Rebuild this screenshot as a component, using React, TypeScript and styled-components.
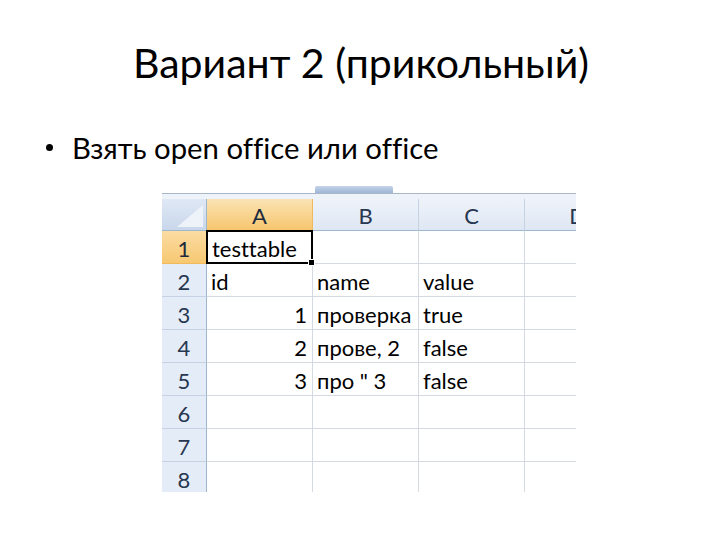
import styled, { createGlobalStyle } from 'styled-components';

const GlobalStyle = createGlobalStyle`
  html, body {
    margin: 0;
    padding: 0;
    background: #ffffff;
  }
  body {
    font-family: Lato, 'Open Sans', 'Noto Sans', sans-serif;
    font-variant-ligatures: none;
    color: #000000;
  }
`;

const columns = ['A', 'B', 'C', 'D'];

interface RowData {
  cells: string[];
  numeric?: boolean;
}

const rows: RowData[] = [
  { cells: ['testtable', '', '', ''] },
  { cells: ['id', 'name', 'value', ''] },
  { cells: ['1', 'проверка', 'true', ''], numeric: true },
  { cells: ['2', 'прове, 2', 'false', ''], numeric: true },
  { cells: ['3', 'про " 3', 'false', ''], numeric: true },
  { cells: ['', '', '', ''] },
  { cells: ['', '', '', ''] },
  { cells: ['', '', '', ''] },
];

const App = () => {
  return (
    <Slide>
      <GlobalStyle />
      <Title>Вариант 2 (прикольный)</Title>
      <BulletList>
        <BulletItem>Взять open office или office</BulletItem>
      </BulletList>
      <Sheet>
        <Ribbon>
          <RibbonTab />
        </Ribbon>
        <Grid>
          <Corner>
            <CornerTriangle />
          </Corner>
          {columns.map((col, i) => (
            <ColHeader key={col} $active={i === 0}>
              {col}
            </ColHeader>
          ))}
          {rows.map((row, r) => (
            <Row key={r} row={row} index={r} />
          ))}
        </Grid>
      </Sheet>
    </Slide>
  );
};

const Row = ({ row, index }: { row: RowData; index: number }) => (
  <>
    <RowHeader $active={index === 0}>{index + 1}</RowHeader>
    {row.cells.map((text, c) => (
      <Cell key={c} $right={row.numeric && c === 0} $selected={index === 0 && c === 0}>
        {text}
      </Cell>
    ))}
  </>
);

export default App;

const Slide = styled.div`
  width: 720px;
  height: 540px;
  overflow: hidden;
  display: flex;
  flex-direction: column;
`;

const Title = styled.h1`
  margin: 39px 0 0;
  font-weight: 400;
  font-size: 41px;
  line-height: 48px;
  text-align: center;
  padding-left: 2px;
`;

const BulletList = styled.ul`
  margin: 43px 0 0;
  padding: 0 0 0 72px;
  list-style: none;
`;

const BulletItem = styled.li`
  position: relative;
  font-size: 29.3px;
  line-height: 36px;

  &::before {
    content: '';
    position: absolute;
    left: -26px;
    top: 14px;
    width: 7px;
    height: 7px;
    border-radius: 50%;
    background: #000000;
  }
`;

const Sheet = styled.div`
  margin: 20px 0 0 162px;
  width: 414px;
  height: 306px;
  overflow: hidden;
`;

const Ribbon = styled.div`
  height: 13px;
  background: linear-gradient(#ffffff 0 7px, #a9b7c8 7px 8px, #eef3fa 8px);
  display: flex;
`;

const RibbonTab = styled.div`
  margin-left: 153px;
  width: 78px;
  height: 7px;
  background: linear-gradient(#c4d3e8, #9fb6d6);
  border-radius: 2px 2px 0 0;
`;

const Grid = styled.div`
  display: grid;
  grid-template-columns: 45px 106px 106px 106px 106px;
  grid-template-rows: 32px repeat(8, 33px);
`;

const Corner = styled.div`
  position: relative;
  background: linear-gradient(#dfe8f5, #c9d7eb);
  border-right: 1px solid #9eb6ce;
  border-bottom: 1px solid #9eb6ce;
  overflow: hidden;
`;

const CornerTriangle = styled.div`
  position: absolute;
  right: 3px;
  bottom: 3px;
  width: 0;
  height: 0;
  border-left: 26px solid transparent;
  border-bottom: 22px solid #eef2f9;
`;

const ColHeader = styled.div<{ $active?: boolean }>`
  display: flex;
  align-items: center;
  justify-content: center;
  padding-top: 2px;
  font-size: 22px;
  color: ${({ $active }) => ($active ? '#1c2a3e' : '#27374f')};
  background: ${({ $active }) =>
    $active ? 'linear-gradient(#fbe3b4, #f6c66d)' : 'linear-gradient(#eef3fa, #dfe7f3)'};
  border-right: 1px solid ${({ $active }) => ($active ? '#f2b95c' : '#c5d2e3')};
  border-bottom: 1px solid #9eb6ce;
`;

const RowHeader = styled.div<{ $active?: boolean }>`
  display: flex;
  align-items: center;
  justify-content: center;
  padding-top: 2px;
  font-size: 22px;
  color: ${({ $active }) => ($active ? '#1c2a3e' : '#27374f')};
  background: ${({ $active }) => ($active ? 'linear-gradient(#fbdca3, #f7c872)' : '#e4ecf7')};
  border-right: 1px solid #9eb6ce;
  border-bottom: 1px solid ${({ $active }) => ($active ? '#f2b95c' : '#c5d2e3')};
`;

const Cell = styled.div<{ $right?: boolean; $selected?: boolean }>`
  position: relative;
  display: flex;
  align-items: center;
  justify-content: ${({ $right }) => ($right ? 'flex-end' : 'flex-start')};
  padding: 3px 5px 0 4px;
  font-size: 22px;
  white-space: nowrap;
  border-right: 1px solid #d4d9e2;
  border-bottom: 1px solid #d4d9e2;
  ${({ $selected }) =>
    $selected &&
    `
    border: 2px solid #000000;
    margin: -1px 0 0 -1px;
    z-index: 1;
    &::after {
      content: '';
      position: absolute;
      right: -4px;
      bottom: -4px;
      width: 5px;
      height: 5px;
      background: #000000;
      border: 1px solid #ffffff;
    }
  `}
`;
